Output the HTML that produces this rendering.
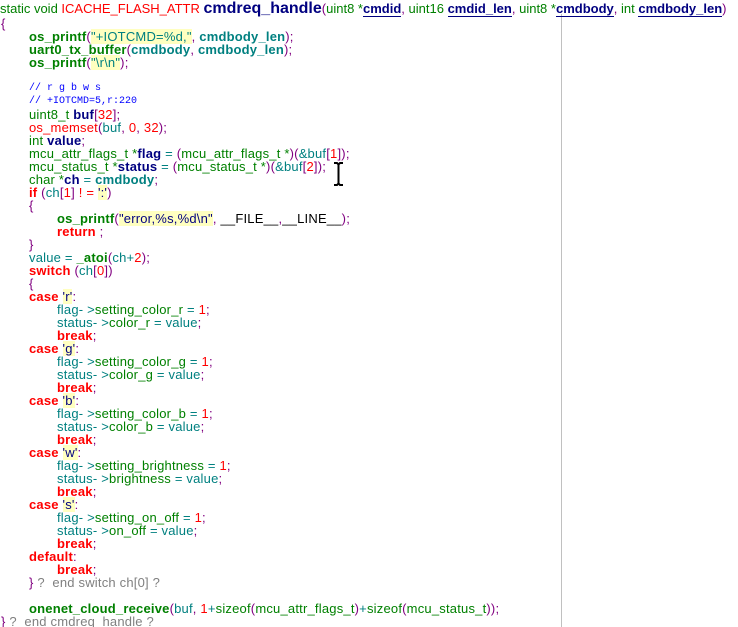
<!DOCTYPE html>
<html><head><meta charset="utf-8"><style>
html,body{margin:0;padding:0;background:#fff;width:738px;height:627px;overflow:hidden;position:relative}
.l{position:absolute;left:0;white-space:pre;font-family:"Liberation Sans",sans-serif;font-size:13px;letter-spacing:0.2px;line-height:13px;height:13px;color:#008080}
.g{color:#008000}.r{color:#ff0000}.p{color:#800080}.t{color:#008080}
.fn{font-weight:bold;color:#008000}
.kw{font-weight:bold;color:#ff0000}
.v{font-weight:bold;color:#000080}
.s{background:#ffffc0;color:#008080}
.sc{background:#ffffc0;color:#000080}
.c{font-family:"Liberation Mono",monospace;font-size:10px;letter-spacing:0;color:#0000ff}
.u{font-weight:bold;color:#000080;border-bottom:1px solid #000080}
.gr{color:#808080}
.big{font-weight:bold;color:#000080;font-size:16px;letter-spacing:0}
</style></head><body>
<div style="position:absolute;left:561px;top:14px;width:1px;height:613px;background:#c0c0c0"></div>
<div class="l" style="top:1px;height:16px;line-height:16px;letter-spacing:0"><span class="g">static void </span><span class="r">ICACHE_FLASH_ATTR </span><span class="big">cmdreq_handle</span><span class="p">(</span><span class="g">uint8 *</span><span class="u">cmdid</span><span class="p">, </span><span class="g">uint16 </span><span class="u">cmdid_len</span><span class="p">, </span><span class="g">uint8 *</span><span class="u">cmdbody</span><span class="p">, </span><span class="g">int </span><span class="u">cmdbody_len</span><span class="p">)</span></div>
<div class="l p" style="top:17px;left:1px">{</div>
<div class="l" style="top:30px;left:29px"><span class="fn">os_printf</span><span class="p">(</span><span class="s">"+IOTCMD=%d,"</span><span class="p">, </span><span class="v" style="color:#008080">cmdbody_len</span><span class="p">);</span></div>
<div class="l" style="top:43px;left:29px"><span class="fn">uart0_tx_buffer</span><span class="p">(</span><span class="v" style="color:#008080">cmdbody</span><span class="p">, </span><span class="v" style="color:#008080">cmdbody_len</span><span class="p">);</span></div>
<div class="l" style="top:56px;left:29px"><span class="fn">os_printf</span><span class="p">(</span><span class="s">"\r\n"</span><span class="p">);</span></div>
<div class="l c" style="top:82px;left:29px">// r g b w s</div>
<div class="l c" style="top:95px;left:29px">// +IOTCMD=5,r:220</div>
<div class="l" style="top:108px;left:29px"><span class="g">uint8_t </span><span class="v">buf</span><span class="p">[</span><span class="r">32</span><span class="p">];</span></div>
<div class="l" style="top:121px;left:29px"><span class="r">os_memset</span><span class="p">(</span>buf<span class="p">, </span><span class="r">0</span><span class="p">, </span><span class="r">32</span><span class="p">);</span></div>
<div class="l" style="top:134px;left:29px"><span class="g">int </span><span class="v">value</span><span class="p">;</span></div>
<div class="l" style="top:147px;left:29px"><span class="g">mcu_attr_flags_t *</span><span class="v">flag</span> = <span class="p">(</span><span class="g">mcu_attr_flags_t *</span><span class="p">)(</span>&amp;buf<span class="p">[</span><span class="r">1</span><span class="p">]);</span></div>
<div class="l" style="top:160px;left:29px"><span class="g">mcu_status_t *</span><span class="v">status</span> = <span class="p">(</span><span class="g">mcu_status_t *</span><span class="p">)(</span>&amp;buf<span class="p">[</span><span class="r">2</span><span class="p">]);</span></div>
<div class="l" style="top:173px;left:29px"><span class="g">char *</span><span class="v">ch</span> = <span class="v" style="color:#008080">cmdbody</span><span class="p">;</span></div>
<div class="l" style="top:186px;left:29px"><span class="kw">if</span> <span class="p">(</span>ch<span class="p">[</span><span class="r">1</span><span class="p">]</span> <span class="r">! = </span><span class="sc">':'</span><span class="p">)</span></div>
<div class="l p" style="top:199px;left:29px">{</div>
<div class="l" style="top:212px;left:57px"><span class="fn">os_printf</span><span class="p">(</span><span class="sc">"error,%s,%d\n"</span><span class="p">, </span><span style="color:#000">__FILE__</span><span class="p">,</span><span style="color:#000">__LINE__</span><span class="p">);</span></div>
<div class="l" style="top:225px;left:57px"><span class="kw">return</span> <span class="p">;</span></div>
<div class="l p" style="top:238px;left:29px">}</div>
<div class="l" style="top:251px;left:29px">value = <span class="fn">_atoi</span><span class="p">(</span>ch+<span class="r">2</span><span class="p">);</span></div>
<div class="l" style="top:264px;left:29px"><span class="kw">switch</span> <span class="p">(</span>ch<span class="p">[</span><span class="r">0</span><span class="p">])</span></div>
<div class="l p" style="top:277px;left:29px">{</div>

<div class="l" style="top:290px;left:29px"><span class="kw">case</span> <span class="sc">'r'</span><span class="p">:</span></div>
<div class="l" style="top:303px;left:57px">flag- &gt;<span class="g">setting_color_r</span> = <span class="r">1</span><span class="p">;</span></div>
<div class="l" style="top:316px;left:57px">status- &gt;<span class="g">color_r</span> = value<span class="p">;</span></div>
<div class="l" style="top:329px;left:57px"><span class="kw">break</span><span class="p">;</span></div>

<div class="l" style="top:342px;left:29px"><span class="kw">case</span> <span class="sc">'g'</span><span class="p">:</span></div>
<div class="l" style="top:355px;left:57px">flag- &gt;<span class="g">setting_color_g</span> = <span class="r">1</span><span class="p">;</span></div>
<div class="l" style="top:368px;left:57px">status- &gt;<span class="g">color_g</span> = value<span class="p">;</span></div>
<div class="l" style="top:381px;left:57px"><span class="kw">break</span><span class="p">;</span></div>

<div class="l" style="top:394px;left:29px"><span class="kw">case</span> <span class="sc">'b'</span><span class="p">:</span></div>
<div class="l" style="top:407px;left:57px">flag- &gt;<span class="g">setting_color_b</span> = <span class="r">1</span><span class="p">;</span></div>
<div class="l" style="top:420px;left:57px">status- &gt;<span class="g">color_b</span> = value<span class="p">;</span></div>
<div class="l" style="top:433px;left:57px"><span class="kw">break</span><span class="p">;</span></div>

<div class="l" style="top:446px;left:29px"><span class="kw">case</span> <span class="sc">'w'</span><span class="p">:</span></div>
<div class="l" style="top:459px;left:57px">flag- &gt;<span class="g">setting_brightness</span> = <span class="r">1</span><span class="p">;</span></div>
<div class="l" style="top:472px;left:57px">status- &gt;<span class="g">brightness</span> = value<span class="p">;</span></div>
<div class="l" style="top:485px;left:57px"><span class="kw">break</span><span class="p">;</span></div>

<div class="l" style="top:498px;left:29px"><span class="kw">case</span> <span class="sc">'s'</span><span class="p">:</span></div>
<div class="l" style="top:511px;left:57px">flag- &gt;<span class="g">setting_on_off</span> = <span class="r">1</span><span class="p">;</span></div>
<div class="l" style="top:524px;left:57px">status- &gt;<span class="g">on_off</span> = value<span class="p">;</span></div>
<div class="l" style="top:537px;left:57px"><span class="kw">break</span><span class="p">;</span></div>
<div class="l" style="top:550px;left:29px"><span class="kw">default</span><span class="p">:</span></div>
<div class="l" style="top:563px;left:57px"><span class="kw">break</span><span class="p">;</span></div>
<div class="l" style="top:576px;left:29px"><span class="p">}</span><span class="gr"> ?  end switch ch[0] ?</span></div>
<div class="l" style="top:602px;left:29px"><span class="fn">onenet_cloud_receive</span><span class="p">(</span>buf<span class="p">, </span><span class="r">1</span>+<span class="g">sizeof</span><span class="p">(</span><span class="g">mcu_attr_flags_t</span><span class="p">)</span>+<span class="g">sizeof</span><span class="p">(</span><span class="g">mcu_status_t</span><span class="p">));</span></div>
<div class="l" style="top:615px;left:1px"><span class="p">}</span><span class="gr"> ?  end cmdreq_handle ?</span></div>

<svg style="position:absolute;left:333px;top:162px" width="11" height="24" viewBox="0 0 11 24"><path d="M1 1h3l1.5 1.5L7 1h3M5.5 2.5v19M1 23h3l1.5-1.5L7 23h3" stroke="#000" stroke-width="2" fill="none"/></svg>
</body></html>
